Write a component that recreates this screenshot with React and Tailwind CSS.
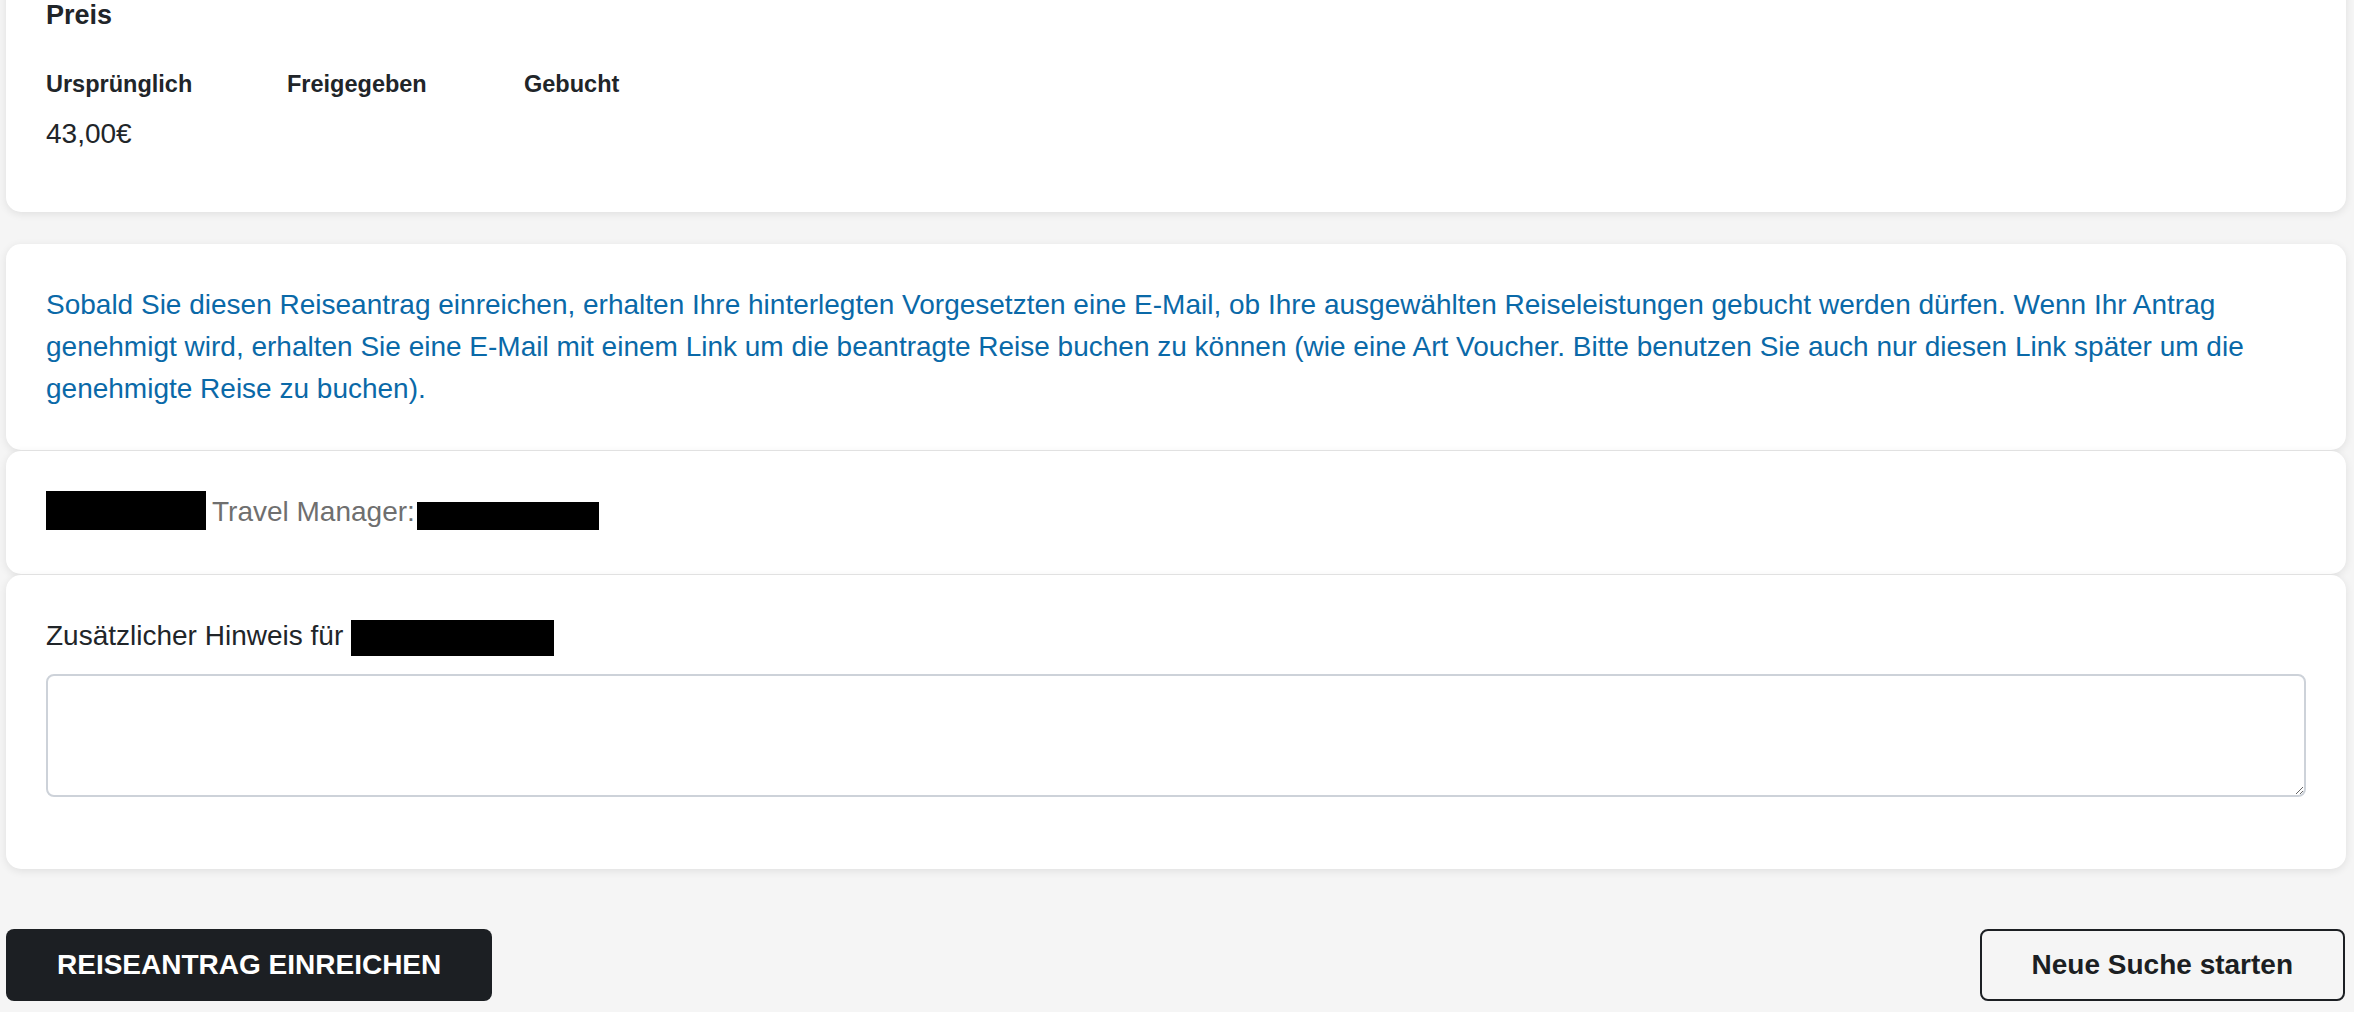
export default function App() {
  const card = 'bg-white rounded-[15px] shadow-[0_2px_8px_rgba(0,0,0,0.09)]';

  return (
    <div className="min-h-screen overflow-hidden bg-[#f5f5f5] font-['Liberation_Sans',Arial,sans-serif] text-[#212529]">
      <div className="ml-[6px] mr-[8px] -mt-[41px]">
        {/* Preis */}
        <div className={`${card} px-[40px] pt-[40px] pb-[57px]`}>
          <h3 className="text-[27px] font-bold leading-[32px]">Preis</h3>
          <div className="mt-[39px] grid grid-cols-[241px_237px_auto] text-[23.5px] font-bold leading-[28px]">
            <div>Ursprünglich</div>
            <div>Freigegeben</div>
            <div>Gebucht</div>
          </div>
          <div className="mt-[15px] text-[28px] leading-[42px]">43,00€</div>
        </div>

        {/* Hinweis */}
        <div className={`${card} mt-[32px] p-[40px] text-[28px] leading-[42px] text-[#0a69a8]`}>
          Sobald Sie diesen Reiseantrag einreichen, erhalten Ihre hinterlegten Vorgesetzten eine E-Mail, ob Ihre ausgewählten
          Reiseleistungen gebucht werden dürfen. Wenn Ihr Antrag genehmigt wird, erhalten Sie eine E-Mail mit einem Link um die
          beantragte Reise buchen zu können (wie eine Art Voucher. Bitte benutzen Sie auch nur diesen Link später um die genehmigte
          Reise zu buchen).
        </div>

        {/* Travel Manager */}
        <div className={`${card} mt-[1px] px-[40px] pt-[40px] pb-[41px]`}>
          <div className="flex items-start text-[28px] leading-[42px] text-[#6f6f6f]">
            <span className="block h-[39px] w-[160px] bg-black" />
            <span className="ml-[6px]">Travel Manager:</span>
            <span className="ml-[2px] mt-[11px] block h-[28px] w-[182px] bg-black" />
          </div>
        </div>

        {/* Zusätzlicher Hinweis */}
        <div className={`${card} mt-[1px] px-[40px] pt-[40px] pb-[72px]`}>
          <div className="flex items-start text-[28px] leading-[42px]">
            <span>Zusätzlicher Hinweis für</span>
            <span className="ml-[8px] mt-[5px] block h-[36px] w-[203px] bg-black" />
          </div>
          <textarea className="mt-[17px] block h-[123px] w-full rounded-[8px] border-2 border-[#cdd2d9] bg-white" />
        </div>

        {/* Buttons */}
        <div className="mt-[60px] flex items-center justify-between">
          <button className="h-[72px] rounded-[8px] bg-[#1c1f23] px-[51px] text-[28px] font-bold text-white">
            REISEANTRAG EINREICHEN
          </button>
          <button className="mr-[1px] h-[72px] rounded-[8px] border-2 border-[#1c1f23] px-[50px] text-[28px] font-bold text-[#1c1f23]">
            Neue Suche starten
          </button>
        </div>
      </div>
    </div>
  );
}
